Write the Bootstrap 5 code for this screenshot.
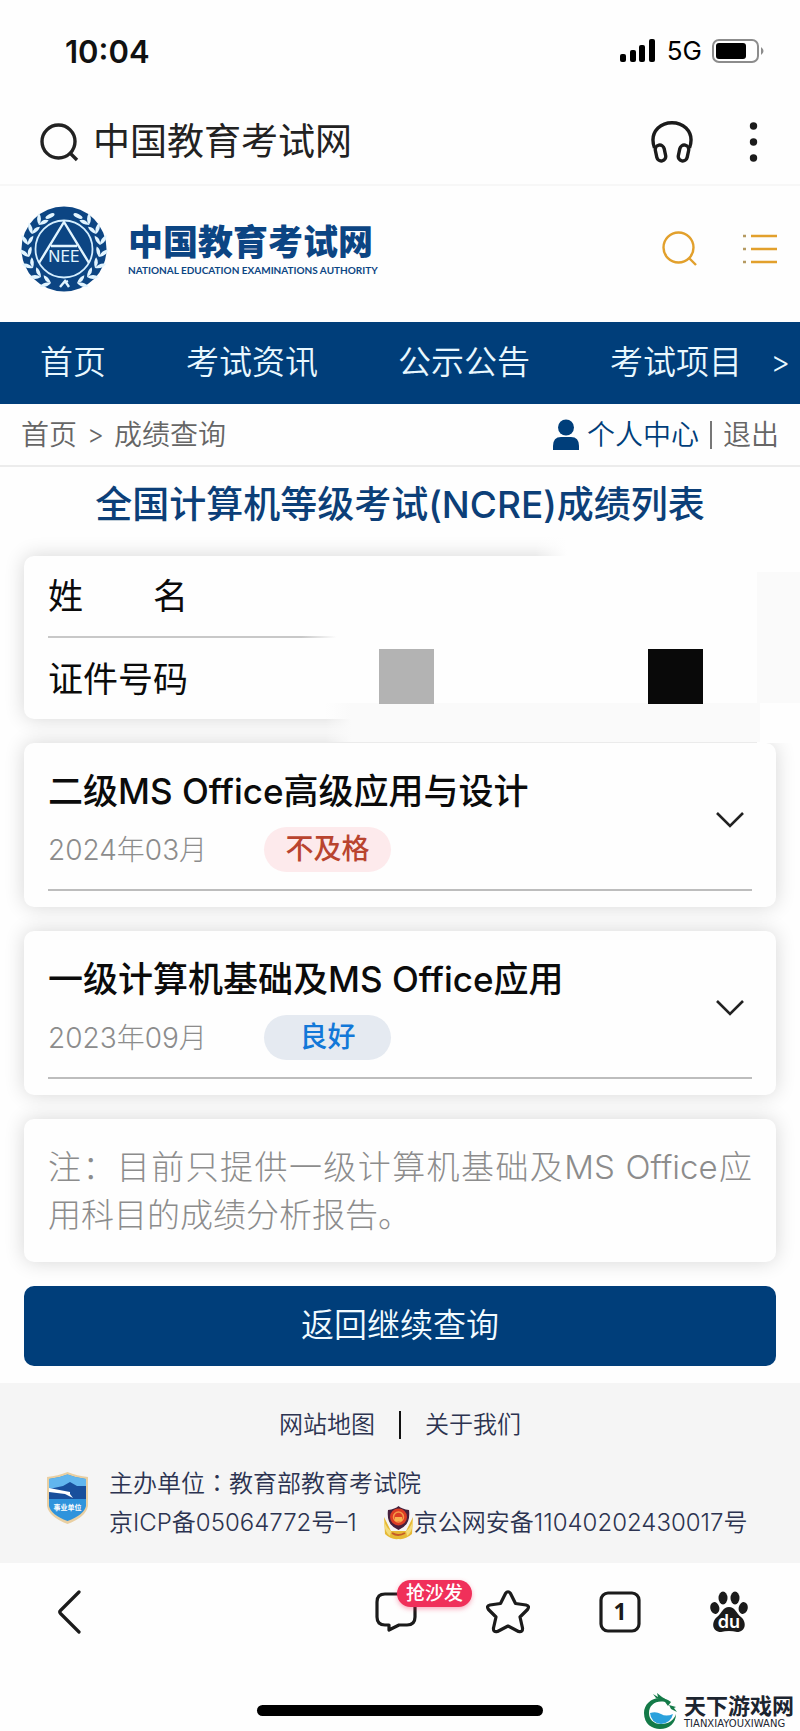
<!DOCTYPE html>
<html lang="zh-CN">
<head>
<meta charset="utf-8">
<meta name="viewport" content="width=device-width, initial-scale=1">
<title>中国教育考试网 - 成绩查询</title>
<link href="https://cdn.jsdelivr.net/npm/bootstrap@5.3.0/dist/css/bootstrap.min.css" rel="stylesheet">
<style>
  :root { --navy: #003e7a; --page: #fefefe; --line: #bdbdbd; }
  body { background: var(--page); color: #111; font-family: Inter, "Noto Sans CJK SC", sans-serif; line-height: 1; }
  a { color: inherit; text-decoration: none; }
  svg { display: block; flex: none; }
  .btn-plain { border: 0; padding: 0; background: none; color: inherit; }

  .status-bar { height: 102px; padding: 0 36px 0 65px; }
  .status-time { font-size: 31px; font-weight: 600; }
  .status-net { font-size: 26px; font-weight: 400; color: #000; }
  .address-bar { height: 84px; padding: 0 39px 2px 40px; border-bottom: 2px solid #f7f7f7; }
  .address-name { gap: 14px; }
  .address-title { font-size: 37px; line-height: 48px; font-weight: 400; color: #222; }
  .head-tools { gap: 45px; }

  .site-head { height: 136px; padding: 0 23px 10px 20px; }
  .brand-cn { font-size: 35px; line-height: 42px; font-weight: 900; color: #0c4583; }
  .brand-en { font: 700 10px/14px Lato, sans-serif; color: #0c4583; }

  .main-nav { height: 82px; padding: 0 10px 2px 40px; background: var(--navy); color: #e9f8ff; font-size: 33px; line-height: 48px; font-weight: 350; }
  .main-nav ul { gap: 80px; }
  .nav-more { font-size: 30px; font-weight: 300; }

  .crumbs { height: 63px; padding: 0 21px 0 21px; border-bottom: 2px solid #ececec; font-size: 28px; line-height: 40px; font-weight: 350; color: #666; }
  .crumb-list { gap: 10px; }
  .crumb-sep { font-size: 26px; }
  .user-links { gap: 11px; }
  .user-links .account { color: var(--navy); gap: 8px; }
  .rule-v { width: 2px; height: 28px; background: #777; }

  .page-title { margin: 0; padding: 14px 0 27px; font-size: 37px; line-height: 48px; font-weight: 500; color: #0c3f78; }

  .panel-list { gap: 24px; padding: 0 24px 17px; }
  .panel { background: var(--page); border-radius: 10px; box-shadow: 0 0 20px rgba(0,0,0,.16); padding: 0 24px; color: #0b0b0b; }

  .identity { position: relative; font-size: 35px; line-height: 48px; }
  .identity::before { content: ""; position: absolute; top: -24px; right: -24px; left: 68%; bottom: 16px; background: linear-gradient(to right, transparent, var(--page) 12%); }
  .identity::after { content: ""; position: absolute; top: 147px; right: 16px; left: 40%; height: 39px; background: linear-gradient(to right, transparent, #fafafa 6%); }
  .identity .veil { position: absolute; top: 16px; right: -24px; width: 43px; bottom: -24px; background: linear-gradient(#fafafa 131px, var(--page) 131px); }
  .identity-row { position: relative; z-index: 1; height: 80px; }
  .identity-row dt { font-weight: 400; width: 140px; }
  .identity-rule { height: 2px; margin-bottom: 1px; background: linear-gradient(to right, #c8c8c8 36%, transparent 41%); }
  .masks { gap: 214px; margin: 0 49px 6px 0; }
  .mask { width: 55px; height: 55px; background: #b3b3b3; }
  .mask-dark { background: #090909; }

  .result { padding-top: 24px; padding-bottom: 16px; }
  .result-body { padding-bottom: 17px; border-bottom: 2px solid var(--line); }
  .result h2 { margin: 0 0 12px; font-size: 35px; line-height: 48px; font-weight: 500; }
  .result time { width: 216px; font-size: 28px; font-weight: 300; color: #8c8c8c; }
  .grade { width: 127px; line-height: 45px; font-size: 28px; font-weight: 500; text-align: center; border-radius: 23px; }
  .grade-fail { background: #fdeaec; color: #b9442f; }
  .grade-good { background: #e5eaf1; color: #1278d8; }
  .toggle { padding: 8px; color: #222; }

  .note { padding-top: 24px; padding-bottom: 23px; font-size: 33px; line-height: 48px; font-weight: 300; color: #8c8c8c; text-align: justify; }
  .note p { margin: 0; }
  .btn-return { height: 80px; border-radius: 10px; background: var(--navy); color: #f2fbff; font-size: 33px; font-weight: 350; border: 0; }
  .btn-return:hover { background: #00325f; color: #fff; }

  .site-foot { background: #f5f5f5; color: #2c3350; padding: 22px 46px 21px; font-size: 24px; line-height: 39px; font-weight: 350; }
  .foot-links { gap: 24px; margin-bottom: 20px; }
  .foot-links .rule-v { background: #111; }
  .foot-info { gap: 20px; }
  .foot-records { gap: 26px; }
  .colon-mid { font-family: "Noto Sans CJK TC", sans-serif; line-height: 1; }

  .tool-bar { height: 98px; padding: 0 52px 0 57px; color: #1b1b1b; }
  .tool-group { gap: 69px; }
  .sofa { left: 22px; top: -11px; height: 27px; padding: 0 9px; border-radius: 14px; background: #f0305a; color: #fff; font-size: 19px; line-height: 27px; font-weight: 500; box-shadow: 0 2px 5px rgba(240,48,90,.4); }
  .home-area { height: 70px; }
  .home-pill { width: 286px; height: 11px; border-radius: 6px; background: #000; margin-bottom: 15px; }
  .source-mark { right: 6px; bottom: 1px; gap: 6px; color: #1c2530; }
  .source-cn { font-size: 22px; line-height: 24px; font-weight: 700; }
  .source-en { font: 10px/12px "DejaVu Sans", sans-serif; }
</style>
</head>
<body>

<div class="status-bar d-flex align-items-center justify-content-between">
  <span class="status-time">10:04</span>
  <div class="d-flex align-items-center gap-2">
    <svg width="40" height="24" viewBox="0 0 40 24"><g fill="#000"><rect x="1" y="15" width="6" height="8" rx="2"/><rect x="11" y="11" width="6" height="12" rx="2"/><rect x="20" y="6" width="6" height="17" rx="2"/><rect x="30" y="0" width="6" height="23" rx="2"/></g></svg>
    <span class="status-net">5G</span>
    <svg width="54" height="26" viewBox="0 0 54 26"><rect x="3" y="2" width="45" height="22" rx="6" fill="none" stroke="#8c8c8c" stroke-width="2"/><rect x="6" y="5" width="30" height="16" rx="3"/><path d="M51 9q5 4 0 8z" fill="#8c8c8c"/></svg>
  </div>
</div>

<header>
  <div class="address-bar d-flex align-items-center justify-content-between">
    <div class="address-name d-flex align-items-center">
      <svg width="39" height="39" viewBox="0 0 39 39" fill="none" stroke="#222" stroke-width="3.4"><circle cx="18.500" cy="18.500" r="16.500"/><path d="M30 30l7 7"/></svg>
      <span class="address-title">中国教育考试网</span>
    </div>
    <div class="head-tools d-flex align-items-center">
      <button class="btn-plain" aria-label="收听"><svg width="42" height="42" viewBox="0 0 42 42" fill="none" stroke="#1b1b1b" stroke-width="3.4"><path d="M3.500 27C1 20 1 13 7 7C14.500 0 27.500 0 35 7C41 13 41 20 38.500 27"/><rect x="5" y="24" width="9" height="16" rx="4.500" transform="rotate(-12 9.500 32)"/><rect x="28" y="24" width="9" height="16" rx="4.500" transform="rotate(12 32.500 32)"/></svg></button>
      <button class="btn-plain" aria-label="更多"><svg width="23" height="42" viewBox="0 0 23 42" fill="#1b1b1b"><circle cx="15.500" cy="5" r="3.700"/><circle cx="15.500" cy="21" r="3.700"/><circle cx="15.500" cy="37" r="3.700"/></svg></button>
    </div>
  </div>

  <div class="site-head d-flex align-items-center justify-content-between">
    <a href="#" class="d-flex align-items-center" aria-label="中国教育考试网">
      <svg width="88" height="88" viewBox="0 0 88 88">
        <defs>
          <g id="leaf"><path d="M0 0Q-7-2-8-9Q-1-7 0 0ZM0 0Q5-5 4-10Q-2-7 0 0Z"/></g>
          <g id="branch" fill="#e2f5ff">
            <use href="#leaf" transform="translate(31 78) rotate(-65)"/><use href="#leaf" transform="translate(21 72) rotate(-48)"/>
            <use href="#leaf" transform="translate(13 63) rotate(-28)"/><use href="#leaf" transform="translate(9 52) rotate(-10)"/>
            <use href="#leaf" transform="translate(8 40) rotate(8)"/><use href="#leaf" transform="translate(12 29) rotate(26)"/>
            <use href="#leaf" transform="translate(19 20) rotate(42)"/><ellipse cx="30" cy="11" rx="5" ry="2" transform="rotate(-28 30 11)"/>
          </g>
        </defs>
        <circle cx="44" cy="44" r="42.500" fill="#0c4583"/>
        <use href="#branch"/><use href="#branch" transform="matrix(-1 0 0 1 88 0)"/>
        <circle cx="44" cy="44" r="28.500" fill="#0c4583" stroke="#d5efff" stroke-width="1.800"/>
        <path d="M19 58L44 17L69 58M31 41H57M40 82l5-6l4 6M48 76l-5 2" fill="none" stroke="#e2f5ff" stroke-width="2.400"/>
        <text x="44" y="57" text-anchor="middle" font-family="Inter" font-size="16" fill="#e2f5ff">NEE</text>
      </svg>
      <span class="d-flex flex-column ms-3 ps-1">
        <span class="brand-cn">中国教育考试网</span>
        <span class="brand-en">NATIONAL EDUCATION EXAMINATIONS AUTHORITY</span>
      </span>
    </a>
    <div class="head-tools d-flex align-items-center">
      <button class="btn-plain" aria-label="搜索"><svg width="36" height="36" viewBox="0 0 36 36" fill="none" stroke="#e2a02c" stroke-width="2.400"><circle cx="16.500" cy="16.500" r="15"/><path d="M27 27l7 7"/></svg></button>
      <button class="btn-plain" aria-label="菜单"><svg width="34" height="30" viewBox="0 0 34 30" stroke="#e2a02c" stroke-width="2.400"><path d="M8 2h26M8 15h26M8 28h26"/><path d="M0 2h3M0 15h3M0 28h3" stroke="#b59a62"/></svg></button>
    </div>
  </div>
</header>

<nav class="main-nav d-flex align-items-center justify-content-between text-nowrap overflow-hidden">
  <ul class="list-unstyled d-flex m-0">
    <li><a href="#">首页</a></li>
    <li><a href="#">考试资讯</a></li>
    <li><a href="#">公示公告</a></li>
    <li><a href="#">考试项目</a></li>
  </ul>
  <a href="#" class="nav-more" aria-label="更多栏目">&gt;</a>
</nav>

<div class="crumbs d-flex align-items-center justify-content-between">
  <div class="crumb-list d-flex align-items-center">
    <a href="#">首页</a><span class="crumb-sep">&gt;</span><span>成绩查询</span>
  </div>
  <div class="user-links d-flex align-items-center">
    <a href="#" class="account d-flex align-items-center">
      <svg width="26" height="32" viewBox="0 0 26 32" fill="#003e7a"><circle cx="13" cy="8.500" r="8"/><path d="M0 31V27Q0 18 8 18H18Q26 18 26 27V31Z"/></svg>
      <span>个人中心</span>
    </a>
    <span class="rule-v"></span>
    <a href="#">退出</a>
  </div>
</div>

<main>
  <h1 class="page-title text-center">全国计算机等级考试(NCRE)成绩列表</h1>
  <div class="panel-list d-flex flex-column">
    <dl class="panel identity m-0">
      <div class="veil"></div>
      <div class="identity-row d-flex align-items-center">
        <dt class="d-flex justify-content-between"><span>姓</span><span>名</span></dt>
        <dd class="m-0"></dd>
      </div>
      <div class="identity-rule"></div>
      <div class="identity-row d-flex align-items-center justify-content-between">
        <dt>证件号码</dt>
        <dd class="masks d-flex"><span class="mask"></span><span class="mask mask-dark"></span></dd>
      </div>
    </dl>

    <section class="panel result">
      <div class="result-body d-flex align-items-center justify-content-between">
        <div>
          <h2>二级MS Office高级应用与设计</h2>
          <div class="d-flex align-items-center"><time datetime="2024-03">2024年03月</time><span class="grade grade-fail">不及格</span></div>
        </div>
        <button class="btn-plain toggle" aria-label="展开"><svg width="28" height="18" viewBox="0 0 28 18" fill="none" stroke="currentColor" stroke-width="2.600"><path d="M1 2l13 13L27 2"/></svg></button>
      </div>
    </section>

    <section class="panel result">
      <div class="result-body d-flex align-items-center justify-content-between">
        <div>
          <h2>一级计算机基础及MS Office应用</h2>
          <div class="d-flex align-items-center"><time datetime="2023-09">2023年09月</time><span class="grade grade-good">良好</span></div>
        </div>
        <button class="btn-plain toggle" aria-label="展开"><svg width="28" height="18" viewBox="0 0 28 18" fill="none" stroke="currentColor" stroke-width="2.600"><path d="M1 2l13 13L27 2"/></svg></button>
      </div>
    </section>

    <section class="panel note"><p>注：目前只提供一级计算机基础及MS Office应用科目的成绩分析报告。</p></section>

    <button class="btn btn-return w-100">返回继续查询</button>
  </div>
</main>

<footer class="site-foot">
  <div class="foot-links d-flex align-items-center justify-content-center">
    <a href="#">网站地图</a><span class="rule-v"></span><a href="#">关于我们</a>
  </div>
  <div class="foot-info d-flex align-items-start">
    <svg class="mt-2" width="43" height="52" viewBox="0 0 43 52">
      <path d="M1 5Q12 4 21.500 0Q31 4 42 5V34Q40 45 21.500 52Q3 45 1 34Z" fill="#e9cfa2"/>
      <path d="M3 7Q13 6 21.500 2.500Q30 6 40 7V34Q38 43 21.500 49Q5 43 3 34Z" fill="#2f93dc"/>
      <path d="M3 7Q13 6 21.500 2.500Q30 6 40 7V17H3Z" fill="#62b6ee"/>
      <path d="M3 17l14-3l7-4l7 4h9v13H3z" fill="#184f9c"/>
      <path d="M3 16l21 4v2l3 4l-8-4L3 20z" fill="#fff"/>
      <text x="21.500" y="38" text-anchor="middle" font-family="Noto Sans CJK SC" font-weight="700" font-size="7" fill="#fff">事业单位</text>
    </svg>
    <div>
      <div>主办单位<span class="colon-mid" lang="zh-TW">：</span>教育部教育考试院</div>
      <div class="foot-records d-flex flex-wrap align-items-center">
        <a href="#">京ICP备05064772号–1</a>
        <a href="#" class="d-flex align-items-center">
          <svg width="31" height="34" viewBox="0 0 31 34">
            <path d="M1 11L8 25H23L30 11L29 28Q22 34 15.500 33Q8 34 2 28Z" fill="#e6b935"/>
            <path d="M1 14q2 8 7 11l-1 5q-6-4-6-16zM30 14q-2 8-7 11l1 5q6-4 6-16z" fill="#f3dc7c"/>
            <path d="M15.500 0Q19 3 26 4Q28 19 15.500 24Q3 19 5 4Q12 3 15.500 0Z" fill="#46213d"/>
            <circle cx="15.500" cy="11" r="8.500" fill="#dc3c24"/><circle cx="15.500" cy="11" r="5" fill="none" stroke="#f59a48" stroke-width="1.500"/>
            <path d="M12 11h7v4h-7z" fill="#f8b04c"/><path d="M9 27q6 4 13 0" stroke="#c45b28" stroke-width="2" fill="none"/>
          </svg>
          <span>京公网安备11040202430017号</span>
        </a>
      </div>
    </div>
  </div>
</footer>

<div class="tool-bar d-flex align-items-center justify-content-between">
  <button class="btn-plain" aria-label="返回"><svg width="25" height="44" viewBox="0 0 25 44" fill="none" stroke="currentColor" stroke-width="3.200" stroke-linecap="round" stroke-linejoin="round"><path d="M22 2L3.500 20.500Q2 22 3.500 23.500L22 42"/></svg></button>
  <div class="tool-group d-flex align-items-center">
    <button class="btn-plain position-relative" aria-label="评论">
      <svg width="42" height="42" viewBox="0 0 42 42" fill="none" stroke="currentColor" stroke-width="3.200" stroke-linejoin="round"><path d="M10 3H32Q40 3 40 11V26Q40 34 32 34H24L14 39V34H10Q2 34 2 26V11Q2 3 10 3Z"/></svg>
      <span class="sofa position-absolute text-nowrap">抢沙发</span>
    </button>
    <button class="btn-plain" aria-label="收藏"><svg width="44" height="44" viewBox="0 0 44 44" fill="none" stroke="currentColor" stroke-width="3.200" stroke-linejoin="round"><path d="M19.500 3.500Q22 0 24.500 3.500L29.500 13.500L40 15Q44 16 41.500 19.500L34 27L36.500 38Q37 42.500 32.500 41.500L22 36L11.500 41.500Q7 42.500 7.500 38L10 27L2.500 19.500Q0 16 4 15L14.500 13.500Z"/></svg></button>
    <button class="btn-plain" aria-label="窗口 1"><svg width="42" height="42" viewBox="0 0 42 42"><rect x="2" y="2" width="38" height="38" rx="7" fill="none" stroke="currentColor" stroke-width="3.200"/><text x="21" y="29" text-anchor="middle" font-family="Noto Sans" font-size="23" font-weight="700" fill="currentColor">1</text></svg></button>
    <button class="btn-plain" aria-label="百度"><svg width="38" height="42" viewBox="0 0 38 42" fill="currentColor"><ellipse cx="13" cy="7" rx="4.500" ry="6.500"/><ellipse cx="25" cy="7" rx="4.500" ry="6.500"/><ellipse cx="4.800" cy="17" rx="4.500" ry="6" transform="rotate(-12 5 17)"/><ellipse cx="33.200" cy="17" rx="4.500" ry="6" transform="rotate(12 33 17)"/><path d="M19 16C25 16 26 22 31 26C37 31 36 41 27 41Q19 39 11 41C2 41 1 31 7 26C12 22 13 16 19 16Z"/><text x="19" y="37" text-anchor="middle" font-family="Inter" font-weight="600" font-size="18" fill="#fff">du</text></svg></button>
  </div>
</div>

<div class="home-area position-relative d-flex align-items-end justify-content-center">
  <div class="home-pill"></div>
  <div class="source-mark position-absolute d-flex align-items-center">
    <svg width="35" height="37" viewBox="0 0 35 37">
      <path d="M25 7C13 1 1 9 1 20C1 31 9 36 17 36C26 36 33 30 33 21C31 27 26 31 18 31C10 31 6 26 6 20C6 12 13 7 22 9L25 13L28 9Z" fill="#147a48"/>
      <path d="M13 5l-3-4l5 3l-1-4l5 4l5 3zM26 12l7 2l-2 1l3 4l-6-3z" fill="#147a48"/>
      <path d="M7 20q6-2 11 1t12 0Q28 30 18 31Q8 30 7 20Z" fill="#2aa1dc"/>
    </svg>
    <div>
      <div class="source-cn">天下游戏网</div>
      <div class="source-en">TIANXIAYOUXIWANG</div>
    </div>
  </div>
</div>

<script src="https://cdn.jsdelivr.net/npm/bootstrap@5.3.0/dist/js/bootstrap.bundle.min.js"></script>
</body>
</html>
